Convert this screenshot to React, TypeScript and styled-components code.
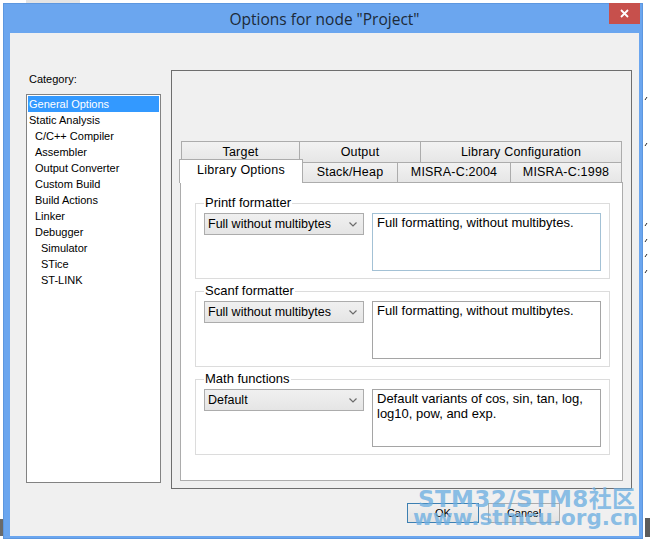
import React from 'react';
import styled, { createGlobalStyle } from 'styled-components';

const GlobalStyle = createGlobalStyle`
  html, body {
    margin: 0;
    padding: 0;
    background: #fff;
  }
  body {
    font-family: "Liberation Sans", Arial, sans-serif;
    color: #000;
  }
`;

const Desktop = styled.div`
  position: relative;
  width: 650px;
  height: 547px;
  padding: 3px 0 0 3px;
  box-sizing: border-box;
  overflow: hidden;
`;

const Scrap = styled.div<{ $x: number; $y: number; $w: number; $h: number; $c: string }>`
  position: absolute;
  left: ${(p) => p.$x}px;
  top: ${(p) => p.$y}px;
  width: ${(p) => p.$w}px;
  height: ${(p) => p.$h}px;
  background: ${(p) => p.$c};
`;

const Ticks = styled.svg`
  position: absolute;
  left: 643px;
  top: 80px;
`;

const Window = styled.div`
  position: relative;
  width: 640px;
  height: 536px;
  box-sizing: border-box;
  background: #6ba6ef;
  border: 1px solid #5d97df;
  padding: 0 3px 2px 6px;
  display: flex;
  flex-direction: column;
`;

const TitleBar = styled.div`
  height: 29px;
  display: grid;
  grid-template-columns: 1fr auto 1fr;
  align-items: start;
`;

const Title = styled.div`
  grid-column: 2;
  font-family: "Open Sans", "Liberation Sans", sans-serif;
  font-size: 15.5px;
  line-height: 30px;
  color: #1c2a38;
  white-space: nowrap;
`;

const CloseButton = styled.div`
  grid-column: 3;
  justify-self: end;
  width: 31px;
  height: 21px;
  margin-top: -1px;
  margin-right: -1px;
  background: #c7504c;
  display: flex;
  align-items: center;
  justify-content: center;
`;

const Client = styled.div`
  flex: 1;
  background: #f0f0f0;
  display: flex;
  flex-direction: column;
  padding: 37px 7px 0 16px;
`;

const Body = styled.div`
  display: flex;
  gap: 10px;
`;

const LeftColumn = styled.div`
  width: 135px;
  padding-top: 2px;
  display: flex;
  flex-direction: column;
`;

const Label = styled.div`
  font-size: 11px;
  line-height: 14px;
  margin: 0 0 8px 3px;
`;

const TreeList = styled.div`
  height: 389px;
  box-sizing: border-box;
  background: #fff;
  border: 1px solid #828282;
  padding: 1px;
`;

const TreeItem = styled.div<{ $level: number; $selected?: boolean }>`
  height: 16px;
  line-height: 16px;
  font-size: 11px;
  white-space: nowrap;
  padding-left: ${(p) => 1 + p.$level * 6}px;
  background: ${(p) => (p.$selected ? '#3399ff' : 'transparent')};
  color: ${(p) => (p.$selected ? '#fff' : '#000')};
`;

const Panel = styled.div`
  flex: 1;
  height: 419px;
  box-sizing: border-box;
  border: 1px solid #6e6e6e;
  padding: 70px 8px 7px 8px;
  display: flex;
  flex-direction: column;
`;

const TabRow = styled.div`
  display: flex;
  align-items: flex-start;
  margin-left: 1px;
  position: relative;
`;

const Tab = styled.div<{ $w: number; $back?: boolean; $active?: boolean }>`
  width: ${(p) => p.$w}px;
  height: ${(p) => (p.$active ? 24 : p.$back ? 21 : 20)}px;
  margin: ${(p) => (p.$active ? '-3px 0 -1px -2px' : '0')};
  box-sizing: border-box;
  border: 1px solid #acacac;
  border-bottom: none;
  border-left-width: ${(p) => (p.$active ? 1 : 0)}px;
  background: ${(p) =>
    p.$active ? '#fff' : 'linear-gradient(#f2f2f2, #e6e6e6)'};
  font-size: 12.5px;
  letter-spacing: 0.2px;
  line-height: ${(p) => (p.$active ? 21 : p.$back ? 20 : 19)}px;
  text-align: center;
  white-space: nowrap;
  position: relative;
  z-index: ${(p) => (p.$active ? 2 : 1)};
  &:first-child {
    border-left-width: 1px;
  }
`;

const TabContent = styled.div`
  flex: 1;
  background: #fff;
  border: 1px solid #acacac;
  padding: 13px 12px 0 14px;
  display: flex;
  flex-direction: column;
  gap: 5px;
`;

const Group = styled.fieldset`
  margin: 0;
  padding: 3px 8px 7px 8px;
  border: 1px solid #dcdcdc;
  display: flex;
  gap: 8px;
  align-items: flex-start;
`;

const Legend = styled.legend`
  padding: 0 1px;
  font-size: 13px;
  line-height: 14px;
`;

const Select = styled.div`
  width: 160px;
  height: 22px;
  box-sizing: border-box;
  border: 1px solid #acacac;
  background: linear-gradient(#f0f0f0, #e5e5e5);
  display: flex;
  align-items: center;
  justify-content: space-between;
  padding: 0 6px 0 3px;
  font-size: 12.5px;
  white-space: nowrap;
`;

const Description = styled.div<{ $focused?: boolean }>`
  width: 229px;
  height: 58px;
  box-sizing: border-box;
  border: 1px solid ${(p) => (p.$focused ? '#a3c1d5' : '#a5a5a5')};
  background: #fff;
  padding: 1px 4px;
  font-size: 13px;
  line-height: 15px;
`;

const Footer = styled.div`
  display: flex;
  justify-content: flex-end;
  gap: 9px;
  margin-top: 14px;
  padding-right: 72px;
`;

const Button = styled.div<{ $default?: boolean }>`
  width: 72px;
  height: 20px;
  box-sizing: border-box;
  border: 1px solid ${(p) => (p.$default ? '#3c7fb1' : '#acacac')};
  background: linear-gradient(#f0f0f0, #e3e3e3);
  font-size: 11px;
  line-height: 18px;
  text-align: center;
`;

const Watermark = styled.div`
  position: absolute;
  left: 413px;
  top: 489px;
  font-family: "DejaVu Sans", "Noto Sans CJK SC", sans-serif;
  font-weight: bold;
  color: rgba(110, 175, 225, 0.8);
  white-space: nowrap;
  pointer-events: none;
`;

const WatermarkLine = styled.div<{ $size: number; $lh: number; $indent?: number; $spacing?: number }>`
  font-size: ${(p) => p.$size}px;
  line-height: ${(p) => p.$lh}px;
  padding-left: ${(p) => p.$indent ?? 0}px;
  letter-spacing: ${(p) => p.$spacing ?? 0}px;
`;

const Chevron = () => (
  <svg width="8" height="5" viewBox="0 0 8 5">
    <path d="M0.5 0.5 L4 4 L7.5 0.5" fill="none" stroke="#6b6b6b" strokeWidth="1.2" />
  </svg>
);

const tree = [
  { label: 'General Options', level: 0 },
  { label: 'Static Analysis', level: 0 },
  { label: 'C/C++ Compiler', level: 1 },
  { label: 'Assembler', level: 1 },
  { label: 'Output Converter', level: 1 },
  { label: 'Custom Build', level: 1 },
  { label: 'Build Actions', level: 1 },
  { label: 'Linker', level: 1 },
  { label: 'Debugger', level: 1 },
  { label: 'Simulator', level: 2 },
  { label: 'STice', level: 2 },
  { label: 'ST-LINK', level: 2 },
];

const groups = [
  {
    title: 'Printf formatter',
    value: 'Full without multibytes',
    text: 'Full formatting, without multibytes.',
    focused: true,
  },
  {
    title: 'Scanf formatter',
    value: 'Full without multibytes',
    text: 'Full formatting, without multibytes.',
  },
  {
    title: 'Math functions',
    value: 'Default',
    text: 'Default variants of cos, sin, tan, log, log10, pow, and exp.',
  },
];

export default function App() {
  return (
    <>
      <GlobalStyle />
      <Desktop>
        <Scrap $x={0} $y={519} $w={3} $h={17} $c="#6a6a6a" />
        <Scrap $x={645} $y={518} $w={5} $h={19} $c="#5c5c5c" />
        <Scrap $x={26} $y={0} $w={54} $h={3} $c="#e4e4e4" />
        <Ticks width="7" height="200" viewBox="0 0 7 200">
          {[17, 63, 143, 159, 174, 190].map((y) => (
            <path key={y} d={`M2 ${y + 3} L4 ${y}`} stroke="#2b2b2b" strokeWidth="1" />
          ))}
        </Ticks>
        <Window>
          <TitleBar>
            <Title>Options for node "Project"</Title>
            <CloseButton>
              <svg width="9" height="9" viewBox="0 0 9 9">
                <path d="M1 1 L8 8 M8 1 L1 8" stroke="#fff" strokeWidth="1.8" />
              </svg>
            </CloseButton>
          </TitleBar>
          <Client>
            <Body>
              <LeftColumn>
                <Label>Category:</Label>
                <TreeList>
                  {tree.map((item, i) => (
                    <TreeItem key={item.label} $level={item.level} $selected={i === 0}>
                      {item.label}
                    </TreeItem>
                  ))}
                </TreeList>
              </LeftColumn>
              <Panel>
                <TabRow>
                  <Tab $back $w={119}>Target</Tab>
                  <Tab $back $w={121}>Output</Tab>
                  <Tab $back $w={201}>Library Configuration</Tab>
                </TabRow>
                <TabRow>
                  <Tab $active $w={124}>Library Options</Tab>
                  <Tab $w={95}>Stack/Heap</Tab>
                  <Tab $w={113}>MISRA-C:2004</Tab>
                  <Tab $w={111}>MISRA-C:1998</Tab>
                </TabRow>
                <TabContent>
                  {groups.map((g) => (
                    <Group key={g.title}>
                      <Legend>{g.title}</Legend>
                      <Select>
                        <span>{g.value}</span>
                        <Chevron />
                      </Select>
                      <Description $focused={g.focused}>{g.text}</Description>
                    </Group>
                  ))}
                </TabContent>
              </Panel>
            </Body>
            <Footer>
              <Button $default>OK</Button>
              <Button>Cancel</Button>
            </Footer>
          </Client>
        </Window>
        <Watermark>
          <WatermarkLine $size={23} $lh={20} $indent={5} $spacing={0.4}>
            STM32/STM8社区
          </WatermarkLine>
          <WatermarkLine $size={21.5} $lh={17}>
            www.stmcu.org.cn
          </WatermarkLine>
        </Watermark>
      </Desktop>
    </>
  );
}
